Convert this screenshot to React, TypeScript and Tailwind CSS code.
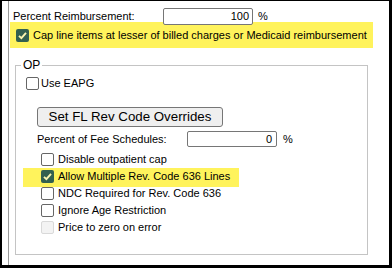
import React from 'react';

const font = { fontFamily: '"Liberation Sans", Arial, sans-serif' };

const Box: React.FC<{ checked?: boolean; disabled?: boolean }> = ({ checked, disabled }) => {
  if (checked) {
    return (
      <span className="w-[13px] h-[13px] rounded-[2px] bg-[#33604f] flex items-center justify-center shrink-0">
        <svg width="11" height="11" viewBox="0 0 11 11">
          <path d="M2 5.8 L4.4 8.2 L9 2.8" fill="none" stroke="#fbf5b0" strokeWidth="1.9" />
        </svg>
      </span>
    );
  }
  if (disabled) {
    return <span className="w-[13px] h-[13px] rounded-[2px] border border-[#d9d9d9] bg-[#f3f3f3] shrink-0" />;
  }
  return <span className="w-[13px] h-[13px] rounded-[2px] border border-[#666] bg-white shrink-0" />;
};

const CheckRow: React.FC<{ label: string; checked?: boolean; disabled?: boolean }> = ({ label, checked, disabled }) => (
  <div className="h-[17px] flex items-center gap-[4px] pl-[25px]">
    <Box checked={checked} disabled={disabled} />
    <span>{label}</span>
  </div>
);

export default function App() {
  return (
    <div className="w-[392px] h-[268px] bg-black pl-[2px] pt-[1px] pr-[3px] pb-[3px] text-[11px] text-black leading-[17px]" style={font}>
      <div className="h-full bg-white pl-[6px]">
        <div className="h-full border-l border-[#9a9a9a] pt-[7px]">
          {/* percent reimbursement */}
          <div className="h-[17px] flex items-center pl-[4px]">
            <span className="w-[150px]">Percent Reimbursement:</span>
            <div className="relative z-10 w-[90px] h-[17px] border border-[#767676] rounded-[2px] bg-white text-right pr-[3px] leading-[15px]">100</div>
            <span className="ml-[5px]">%</span>
          </div>

          <div className="-mt-[3px] ml-[1px] w-[363px] h-[26px] bg-[#fff35c] flex items-center gap-[4px] pl-[6px]">
            <Box checked />
            <span>Cap line items at lesser of billed charges or Medicaid reimbursement</span>
          </div>

          {/* OP group */}
          <div className="relative mt-[17px] ml-[6px] w-[353px] h-[190px] border border-[#c4c4c4] pt-[9px]">
            <span className="absolute -top-[9px] left-[5px] bg-white px-[2px] text-[12px]">OP</span>

            <div className="h-[17px] flex items-center gap-[2px] pl-[10px]">
              <Box />
              <span>Use EAPG</span>
            </div>

            <button className="mt-[15px] ml-[21px] w-[186px] h-[20px] bg-[#efefef] border border-[#767676] rounded-[3px] text-[13.3px] leading-[18px] flex items-center justify-center">
              Set FL Rev Code Overrides
            </button>

            <div className="mt-[4px] h-[16px] flex items-center pl-[21px]">
              <span className="w-[150px]">Percent of Fee Schedules:</span>
              <div className="w-[90px] h-[16px] border border-[#767676] rounded-[2px] bg-white text-right pr-[4px] leading-[14px]">0</div>
              <span className="ml-[6px]">%</span>
            </div>

            <div className="mt-[4px]">
              <CheckRow label="Disable outpatient cap" />
              <div className="ml-[7px] w-[216px] h-[19px] -mb-[2px] bg-[#fff35c] flex items-center gap-[4px] pl-[18px] pb-[3px]">
                <Box checked />
                <span>Allow Multiple Rev. Code 636 Lines</span>
              </div>
              <CheckRow label="NDC Required for Rev. Code 636" />
              <CheckRow label="Ignore Age Restriction" />
              <CheckRow label="Price to zero on error" disabled />
            </div>
          </div>
        </div>
      </div>
    </div>
  );
}
